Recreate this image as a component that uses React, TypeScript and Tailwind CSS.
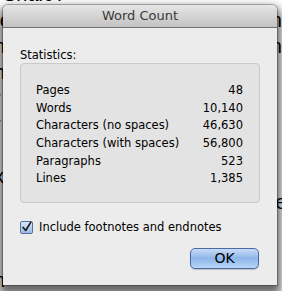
import React from "react";

const rows: [string, string][] = [
  ["Pages", "48"],
  ["Words", "10,140"],
  ["Characters (no spaces)", "46,630"],
  ["Characters (with spaces)", "56,800"],
  ["Paragraphs", "523"],
  ["Lines", "1,385"],
];

const docLines: [string, string][] = [
  ["the", "and"],
  ["on", "ne"],
  ["oh", ""],
  ["or", ""],
  ["or", ""],
  ["", ""],
  ["ex", ""],
  ["th", "ther"],
  ["th", ""],
  ["", ""],
  ["on", ""],
];

export default function App() {
  return (
    <div
      className="relative w-[282px] h-[291px] overflow-hidden bg-white"
      style={{ fontFamily: '"DejaVu Sans", "Liberation Sans", sans-serif' }}
    >
      <div
        className="-mt-[19px] -ml-[17px] w-[310px] text-[20px] leading-[26px] text-black"
        style={{ fontFamily: '"Liberation Sans", sans-serif' }}
      >
        <div className="h-[26px] whitespace-nowrap pl-[20px]">Shale?"</div>
        {docLines.map(([a, b], i) => (
          <div key={i} className="h-[26px] whitespace-nowrap flex justify-between">
            <span>{a}</span>
            <span>{b}</span>
          </div>
        ))}
      </div>
      <div className="absolute left-[3px] top-[5px] w-[274px] h-[280px] flex flex-col bg-[#ececec] rounded-t-[5px] shadow-[0_6px_10px_4px_rgba(0,0,0,0.6),0_0_0_1px_rgba(0,0,0,0.25)]">
        <div className="h-[23px] flex items-center justify-center rounded-t-[5px] bg-gradient-to-b from-[#e6e6e6] to-[#c2c2c2] border-b border-[#6f6f6f] text-[13px] text-[#3a3a3a]">
          Word Count
        </div>
        <div className="flex flex-col px-[17px] pt-[20px]">
          <div className="text-[11.5px] text-black leading-[15px]">Statistics:</div>
          <div className="h-[140px] rounded-[4px] border border-[#cacaca] bg-[#e3e3e3] pl-[15px] pr-[16px] pt-[18px] flex flex-col">
            {rows.map(([k, v]) => (
              <div key={k} className="h-[17.6px] flex items-center justify-between text-[11.5px] text-black">
                <span>{k}</span>
                <span>{v}</span>
              </div>
            ))}
          </div>
          <div className="mt-[17px] h-[15px] flex items-center gap-[6px] text-[11.5px] text-black">
            <div className="w-[13px] h-[13px] rounded-[2px] border border-[#5a6f99] bg-gradient-to-b from-[#d6e4f7] to-[#9dbbe6] flex items-center justify-center">
              <svg width="13" height="13" viewBox="0 0 13 13">
                <path d="M2.5 6.5 L5.5 10 L11.5 0.5" fill="none" stroke="#1a1a1a" strokeWidth="2" strokeLinecap="round" strokeLinejoin="round" />
              </svg>
            </div>
            <span>Include footnotes and endnotes</span>
          </div>
          <div className="mt-[13px] flex justify-end pr-[1px]">
            <div className="w-[69px] h-[21px] rounded-[5px] border border-[#4a6aa5] bg-gradient-to-b from-[#c9dcf7] via-[#8db6ea] to-[#b9d6f8] flex items-center justify-center text-[14px] text-black shadow-[0_1px_1px_rgba(0,0,0,0.2)]">
              OK
            </div>
          </div>
        </div>
      </div>
    </div>
  );
}
